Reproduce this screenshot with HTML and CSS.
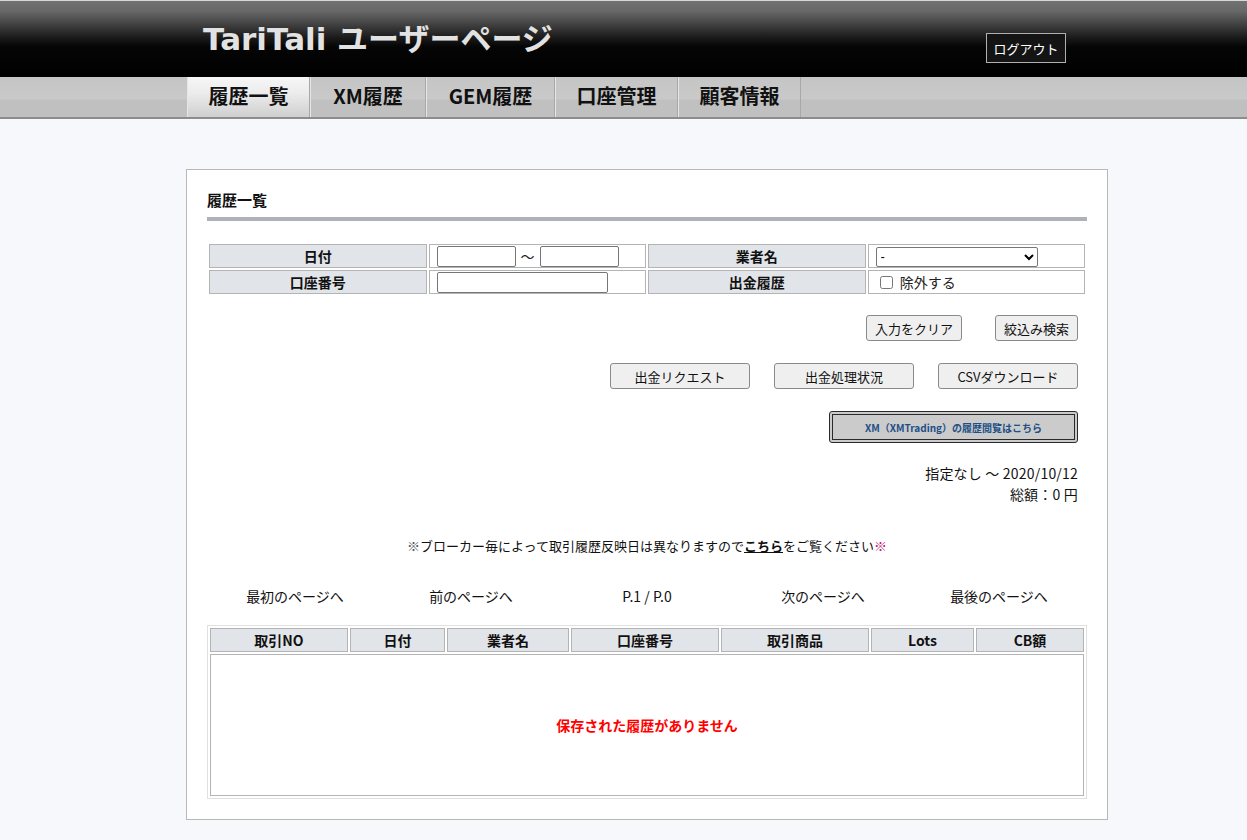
FILE: index.html
```html
<!DOCTYPE html>
<html lang="ja">
<head>
<meta charset="utf-8">
<title>TariTali ユーザーページ</title>
<link rel="stylesheet" href="styles.css">
</head>
<body>
<header class="header">
  <div class="header-inner">
    <h1 class="site-title">TariTali ユーザーページ</h1>
    <button class="logout" type="button">ログアウト</button>
  </div>
</header>
<nav class="nav">
  <ul class="nav-list">
    <li class="nav-item active">履歴一覧</li>
    <li class="nav-item">XM履歴</li>
    <li class="nav-item">GEM履歴</li>
    <li class="nav-item">口座管理</li>
    <li class="nav-item">顧客情報</li>
  </ul>
</nav>
<main class="main">
  <section class="card">
    <h2 class="card-title">履歴一覧</h2>
    <table class="filter">
      <tr>
        <th class="f-label">日付</th>
        <td class="f-value"><input class="in-date" type="text"><span class="tilde">～</span><input class="in-date" type="text"></td>
        <th class="f-label">業者名</th>
        <td class="f-value"><select class="sel"><option>-</option></select></td>
      </tr>
      <tr>
        <th class="f-label">口座番号</th>
        <td class="f-value"><input class="in-account" type="text"></td>
        <th class="f-label">出金履歴</th>
        <td class="f-value"><label class="chk"><input type="checkbox"> 除外する</label></td>
      </tr>
    </table>
    <div class="btn-row row1">
      <button class="btn w-clear" type="button">入力をクリア</button>
      <button class="btn w-search" type="button">絞込み検索</button>
    </div>
    <div class="btn-row row2">
      <button class="btn w-140" type="button">出金リクエスト</button>
      <button class="btn w-140" type="button">出金処理状況</button>
      <button class="btn w-140" type="button">CSVダウンロード</button>
    </div>
    <div class="btn-row row3">
      <button class="btn-xm" type="button">XM（XMTrading）の履歴閲覧はこちら</button>
    </div>
    <div class="summary">
      <p>指定なし ～ 2020/10/12</p>
      <p>総額：0&nbsp;円</p>
    </div>
    <p class="notice"><span class="mark1">※</span>ブローカー毎によって取引履歴反映日は異なりますので<a class="here" href="#">こちら</a>をご覧ください<span class="mark2">※</span></p>
    <div class="pager">
      <span>最初のページへ</span>
      <span>前のページへ</span>
      <span>P.1 / P.0</span>
      <span>次のページへ</span>
      <span>最後のページへ</span>
    </div>
    <table class="results">
      <colgroup>
        <col class="c1"><col class="c2"><col class="c3"><col class="c4"><col class="c5"><col class="c6"><col class="c7">
      </colgroup>
      <tr>
        <th>取引NO</th><th>日付</th><th>業者名</th><th>口座番号</th><th>取引商品</th><th>Lots</th><th>CB額</th>
      </tr>
      <tr>
        <td class="empty" colspan="7">保存された履歴がありません</td>
      </tr>
    </table>
  </section>
</main>
</body>
</html>
```

FILE: styles.css
```css
* { box-sizing: border-box; }
html, body { margin: 0; padding: 0; }
body {
  background: #f7f8fc;
  font-family: "Noto Sans CJK JP", "Noto Sans", sans-serif;
  color: #111;
  font-size: 14px;
}
.header {
  height: 77px;
  border-top: 1px solid #d8d8d8;
  background: linear-gradient(#727272 0, #686868 10px, #1c1c1c 36px, #050505 46px, #000 100%);
}
.header-inner {
  margin-left: 186px;
  width: 922px;
  display: flex;
  justify-content: space-between;
  align-items: flex-start;
}
.site-title {
  margin: 16px 0 0 17px;
  font-family: "DejaVu Sans", "Noto Sans CJK JP", sans-serif;
  font-weight: bold;
  font-size: 31px;
  line-height: 44px;
  color: #e2e2e2;
}
.logout {
  margin: 32px 42px 0 0;
  width: 80px;
  height: 30px;
  background: #141414;
  border: 1px solid #b0b0b0;
  color: #fff;
  font-family: "Noto Sans CJK JP", sans-serif;
  font-size: 13px;
  padding: 0;
}
.nav {
  height: 42px;
  background: linear-gradient(#c5c5c5 0, #c9c9c9 22px, #c0c0c0 23px, #c0c0c0 100%);
  border-bottom: 2px solid #8c8c8c;
}
.nav-list {
  list-style: none;
  margin: 0 0 0 187px;
  padding: 0;
  display: flex;
  height: 40px;
}
.nav-item {
  height: 40px;
  line-height: 37px;
  text-align: center;
  font-weight: bold;
  font-size: 20px;
  color: #111;
  border-left: 1px solid #e6e6e6;
  border-right: 1px solid #a8a8a8;
}
.nav-item:nth-child(1) { width: 123px; }
.nav-item:nth-child(2) { width: 116px; }
.nav-item:nth-child(3) { width: 129px; }
.nav-item:nth-child(4) { width: 123px; }
.nav-item:nth-child(5) { width: 123px; }
.nav-item.active {
  background: linear-gradient(#f6f6f6 0, #ececec 40%, #cfcfcf 100%);
}
.main {
  padding: 50px 0 19px 186px;
}
.card {
  width: 922px;
  background: #fff;
  border: 1px solid #b8b8b8;
  padding: 18px 20px 20px;
}
.card-title {
  margin: 0;
  font-size: 15px;
  font-weight: bold;
  line-height: 24px;
  padding-bottom: 5px;
  border-bottom: 4px solid #aeb2b8;
}
.filter {
  width: 100%;
  margin-top: 21px;
  border-spacing: 2px;
  table-layout: fixed;
}
.filter th, .filter td {
  height: 24px;
  border: 1px solid #b4b4b4;
  padding: 0;
  line-height: 18px;
}
.f-label {
  background: #e1e4e8;
  font-weight: bold;
  font-size: 14px;
  text-align: center;
}
.f-value {
  padding: 0 7px !important;
  font-size: 14px;
  white-space: nowrap;
}
input[type="text"] {
  height: 21px;
  border: 1px solid #767676;
  border-radius: 2px;
  vertical-align: middle;
  padding: 0 2px;
  margin: 0;
}
.in-date { width: 79px; }
.tilde { display: inline-block; width: 24px; text-align: center; vertical-align: middle; font-size: 14px; color: #222; }
.in-account { width: 171px; }
.sel {
  width: 162px;
  height: 20px;
  font-size: 13px;
  border: 1px solid #767676;
  border-radius: 2px;
  background: #fff;
  vertical-align: middle;
  margin: 0;
}
.chk {
  font-size: 14px;
  color: #222;
  padding-left: 4px;
}
.chk input { width: 13px; height: 13px; margin: 0 4px 0 0; vertical-align: -1px; }
.btn-row {
  display: flex;
  justify-content: flex-end;
  padding-right: 9px;
}
.row1 { margin-top: 19px; gap: 33px; }
.row2 { margin-top: 22px; gap: 24px; }
.row3 { margin-top: 22px; }
.btn {
  height: 26px;
  background: #efefef;
  border: 1px solid #8a8a8a;
  border-radius: 3px;
  font-family: "Noto Sans CJK JP", sans-serif;
  font-size: 13px;
  color: #111;
  padding: 0;
}
.w-clear { width: 96px; }
.w-search { width: 83px; }
.w-140 { width: 140px; }
.btn-xm {
  width: 249px;
  height: 32px;
  background: #cbcbcb;
  border: 4px double #2a2a2a;
  border-radius: 3px;
  font-family: "Noto Sans CJK JP", sans-serif;
  font-size: 10px;
  font-weight: bold;
  color: #1d4f86;
  padding: 0;
}
.summary {
  margin-top: 20px;
  padding-right: 9px;
  text-align: right;
  font-size: 14px;
  line-height: 21px;
  color: #111;
  letter-spacing: 0.2px;
}
.summary p { margin: 0; }
.notice {
  margin: 31px 0 0;
  text-align: center;
  font-size: 13px;
  line-height: 20px;
  color: #111;
}
.mark1 { color: #555; }
.mark2 { color: #c2187a; }
.here { color: #111; font-weight: bold; text-decoration: underline; }
.pager {
  margin-top: 30px;
  display: grid;
  grid-template-columns: repeat(5, 1fr);
  text-align: center;
  font-size: 14px;
  line-height: 20px;
  color: #111;
}
.results {
  width: 880px;
  margin-top: 19px;
  border: 1px solid #e0e0e0;
  border-spacing: 2px;
  table-layout: fixed;
}
.c1 { width: 138px; }
.c2 { width: 95px; }
.c3 { width: 122px; }
.c4 { width: 148px; }
.c5 { width: 148px; }
.c6 { width: 103px; }
.c7 { width: 108px; }
.results th {
  height: 24px;
  line-height: 18px;
  background: #e1e4e8;
  border: 1px solid #b4b4b4;
  font-size: 14px;
  font-weight: bold;
  padding: 0;
}
.results td.empty {
  height: 142px;
  border: 1px solid #b4b4b4;
  text-align: center;
  color: #f00;
  font-weight: bold;
  font-size: 14px;
}
```
